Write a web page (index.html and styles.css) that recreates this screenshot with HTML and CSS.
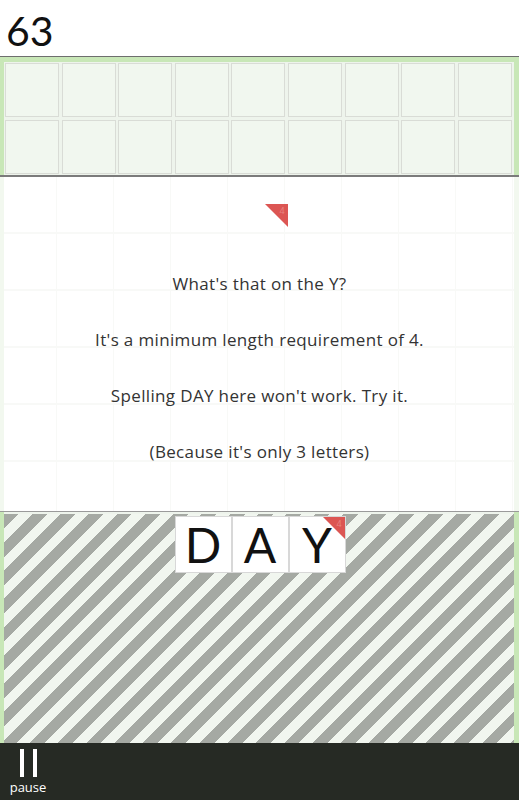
FILE: index.html
```html
<!DOCTYPE html>
<html>
<head>
<meta charset="utf-8">
<link rel="stylesheet" href="styles.css">
</head>
<body>
<div class="header">63</div>
<div class="board">
  <div class="rack">
    <div class="cell"></div><div class="cell"></div><div class="cell"></div><div class="cell"></div><div class="cell"></div><div class="cell"></div><div class="cell"></div><div class="cell"></div><div class="cell"></div>
    <div class="cell"></div><div class="cell"></div><div class="cell"></div><div class="cell"></div><div class="cell"></div><div class="cell"></div><div class="cell"></div><div class="cell"></div><div class="cell"></div>
  </div>
  <div class="panel">
    <svg class="corner-hint" width="23" height="23" viewBox="0 0 23 23">
      <polygon points="0,0 23,0 23,23" fill="#dc5653"/>
      <text x="17" y="10" font-size="9" font-family="Open Sans, sans-serif" fill="#e98582" text-anchor="middle">4</text>
    </svg>
    <p class="line">What's that on the Y?</p>
    <p class="line">It's a minimum length requirement of 4.</p>
    <p class="line">Spelling DAY here won't work. Try it.</p>
    <p class="line">(Because it's only 3 letters)</p>
  </div>
  <div class="sep"></div>
  <div class="play">
    <div class="tiles">
      <div class="tile">D</div>
      <div class="tile">A</div>
      <div class="tile">Y
        <svg class="tile-corner" width="22" height="22" viewBox="0 0 22 22">
          <polygon points="0,0 22,0 22,22" fill="#dc5653"/>
          <text x="16" y="10" font-size="9" font-family="Open Sans, sans-serif" fill="#e98582" text-anchor="middle">4</text>
        </svg>
      </div>
    </div>
  </div>
</div>
<div class="footer">
  <div class="pause">
    <div class="pause-icon"><span class="bar"></span><span class="bar"></span></div>
    <div class="pause-label">pause</div>
  </div>
</div>
</body>
</html>
```
FILE: styles.css
```css
* { box-sizing: border-box; }
html, body { margin: 0; padding: 0; }
body {
  width: 519px;
  height: 800px;
  overflow: hidden;
  background: #fff;
  font-family: "Open Sans", sans-serif;
  display: flex;
  flex-direction: column;
}
.header {
  height: 56px;
  flex: none;
  font-family: Lato, sans-serif;
  font-weight: 400;
  font-size: 41px;
  line-height: 62px;
  padding-left: 6px;
  color: #111;
}
.board {
  flex: 1;
  border-top: 1px solid #6e6e6e;
  background: #c8e7b7;
  display: flex;
  flex-direction: column;
}
.rack {
  height: 113px;
  flex: none;
  margin: 5px 5px 0 4px;
  background: #eef4ec;
  display: grid;
  grid-template-columns: repeat(9, 54px);
  grid-auto-rows: 54px;
  column-gap: 2.6px;
  row-gap: 3px;
  padding: 1px 0 0 1px;
}
.cell {
  background: #f1f7ef;
  border: 1.5px solid #d9dcd6;
}
.panel {
  height: 337px;
  flex: none;
  border-top: 2px solid #7b7b7b;
  border-bottom: 1px solid #9a9a9a;
  background-color: #fff;
  background-image:
    linear-gradient(to right, #f2f8ef 0, #f2f8ef 4px, transparent 4px, transparent 514px, #f2f8ef 514px),
    repeating-linear-gradient(to right, transparent 0, transparent 56px, #f8f9f7 56px, #f8f9f7 57px),
    repeating-linear-gradient(to bottom, transparent 0, transparent 55px, #f8f9f7 55px, #f8f9f7 57px);
  display: flex;
  flex-direction: column;
  align-items: center;
  padding-top: 27px;
}
.corner-hint {
  display: block;
  margin-left: 34px;
  margin-bottom: 29px;
}
.line {
  margin: 0;
  height: 56px;
  line-height: 56px;
  font-size: 17px;
  color: #333;
  letter-spacing: 0.35px;
}
.sep {
  height: 2px;
  flex: none;
  background: #eef4ec;
  margin: 0 5px 0 4px;
}
.play {
  flex: 1;
  margin: 0 5px 0 4px;
  background: repeating-linear-gradient(135deg, #a5a9a3 0, #a5a9a3 10.5px, #f1f6ef 10.5px, #f1f6ef 20px);
  padding-top: 2px;
}
.tiles {
  display: flex;
  justify-content: center;
  padding-left: 2px;
}
.tile {
  position: relative;
  width: 57px;
  height: 57px;
  background: #fff;
  border: 1px solid #d8d8d8;
  font-family: Lato, sans-serif;
  font-weight: 400;
  font-size: 48px;
  line-height: 56px;
  text-align: center;
  color: #111;
}
.tile-corner {
  position: absolute;
  top: 0;
  right: 0;
}
.footer {
  height: 57px;
  flex: none;
  background: #262a24;
  padding: 6px 0 0 10px;
}
.pause {
  display: flex;
  flex-direction: column;
  align-items: center;
  width: 36px;
}
.pause-icon {
  display: flex;
  gap: 9px;
  height: 28px;
}
.bar {
  width: 4px;
  height: 28px;
  background: #fff;
}
.pause-label {
  color: #fff;
  font-size: 13px;
  line-height: 16px;
  margin-top: 2px;
}
```
